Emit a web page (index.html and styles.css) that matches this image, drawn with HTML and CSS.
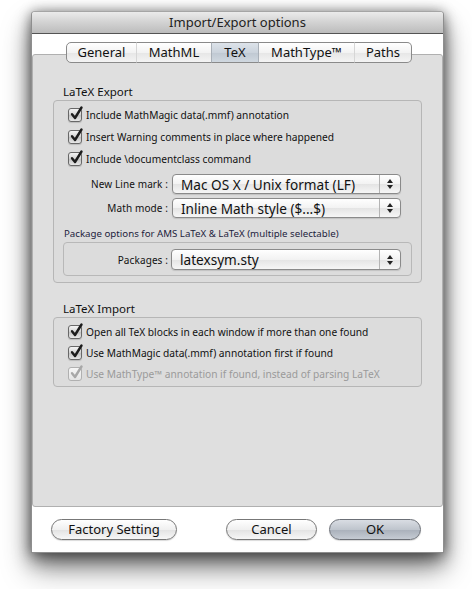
FILE: index.html
```html
<!DOCTYPE html>
<html>
<head>
<meta charset="utf-8">
<title>Import/Export options</title>
<link rel="stylesheet" href="styles.css">
</head>
<body>
<div class="window">
  <div class="titlebar">Import/Export options</div>
  <div class="main">
    <div class="tabs">
      <div class="tab t-general">General</div>
      <div class="tab t-mathml">MathML</div>
      <div class="tab t-tex selected">TeX</div>
      <div class="tab t-mathtype">MathType™</div>
      <div class="tab t-paths">Paths</div>
    </div>
    <div class="panel">
      <div class="group-label">LaTeX Export</div>
      <div class="group export">
        <div class="check"><span class="box"><svg viewBox="0 0 14 14" width="14" height="14"><path d="M3 7.2 L6 11 L12.5 0.5" /></svg></span>Include MathMagic data(.mmf) annotation</div>
        <div class="check"><span class="box"><svg viewBox="0 0 14 14" width="14" height="14"><path d="M3 7.2 L6 11 L12.5 0.5" /></svg></span>Insert Warning comments in place where happened</div>
        <div class="check"><span class="box"><svg viewBox="0 0 14 14" width="14" height="14"><path d="M3 7.2 L6 11 L12.5 0.5" /></svg></span>Include \documentclass command</div>
        <div class="field first">
          <span class="flabel">New Line mark :</span>
          <div class="popup"><span class="ptext">Mac OS X / Unix format (LF)</span><span class="arrows"><svg viewBox="0 0 8 12" width="8" height="12"><path d="M4 1 L7 5 L1 5 Z M4 11 L7 7 L1 7 Z"/></svg></span></div>
        </div>
        <div class="field">
          <span class="flabel">Math mode :</span>
          <div class="popup"><span class="ptext">Inline Math style ($...$)</span><span class="arrows"><svg viewBox="0 0 8 12" width="8" height="12"><path d="M4 1 L7 5 L1 5 Z M4 11 L7 7 L1 7 Z"/></svg></span></div>
        </div>
        <div class="sub-label">Package options for AMS LaTeX &amp; LaTeX (multiple selectable)</div>
        <div class="subgroup">
          <div class="field sub">
            <span class="flabel">Packages :</span>
            <div class="popup tall"><span class="ptext">latexsym.sty</span><span class="arrows"><svg viewBox="0 0 8 12" width="8" height="12"><path d="M4 1 L7 5 L1 5 Z M4 11 L7 7 L1 7 Z"/></svg></span></div>
          </div>
        </div>
      </div>
      <div class="group-label second">LaTeX Import</div>
      <div class="group import">
        <div class="check"><span class="box"><svg viewBox="0 0 14 14" width="14" height="14"><path d="M3 7.2 L6 11 L12.5 0.5" /></svg></span>Open all TeX blocks in each window if more than one found</div>
        <div class="check"><span class="box"><svg viewBox="0 0 14 14" width="14" height="14"><path d="M3 7.2 L6 11 L12.5 0.5" /></svg></span>Use MathMagic data(.mmf) annotation first if found</div>
        <div class="check disabled"><span class="box"><svg viewBox="0 0 14 14" width="14" height="14"><path d="M3 7.2 L6 11 L12.5 0.5" /></svg></span>Use MathType™ annotation if found, instead of parsing LaTeX</div>
      </div>
    </div>
    <div class="footer">
      <button class="btn factory">Factory Setting</button>
      <div class="spacer"></div>
      <button class="btn cancel">Cancel</button>
      <button class="btn ok">OK</button>
    </div>
  </div>
</div>
</body>
</html>
```

FILE: styles.css
```css
* { box-sizing: border-box; }
html, body { margin: 0; padding: 0; background: #ffffff; }
body {
  padding: 11px 0 0 31px;
  min-height: 589px;
  font-family: "Noto Sans", "DejaVu Sans", sans-serif;
  color: #1a1a1a;
}
.window {
  width: 413px;
  height: 542px;
  border: 1px solid #8e8e8e;
  border-top-color: #a5a5a5;
  border-radius: 4px 4px 0 0;
  background: #ffffff;
  display: flex;
  flex-direction: column;
  box-shadow:
    0 0 12px rgba(0, 0, 0, 0.35),
    0 8px 18px rgba(0, 0, 0, 0.45),
    0 16px 30px rgba(0, 0, 0, 0.4);
}
.titlebar {
  height: 22px;
  flex: none;
  border-bottom: 1px solid #545454;
  border-radius: 3px 3px 0 0;
  background: linear-gradient(#ebebeb, #d2d2d2 50%, #bcbcbc);
  text-align: center;
  font-size: 13px;
  line-height: 21px;
  color: #222;
}
.main {
  flex: 1;
  display: flex;
  flex-direction: column;
  padding-top: 8px;
}
.tabs {
  display: flex;
  margin-left: 34px;
  height: 21px;
  position: relative;
  z-index: 1;
  flex: none;
}
.tab {
  height: 21px;
  border: 1px solid #8a8a8a;
  border-left: none;
  background: linear-gradient(#ffffff, #f3f3f3 50%, #e6e6e6 51%, #f4f4f4);
  font-size: 13px;
  line-height: 19px;
  text-align: center;
  color: #111;
}
.tab:first-child { border-left: 1px solid #8a8a8a; border-radius: 5px 0 0 5px; }
.tab:last-child { border-radius: 0 5px 5px 0; }
.tab + .tab { border-left: 1px solid #d6d6d6; margin-left: -1px; }
.tab.selected { background: linear-gradient(#dde3ea, #cbd3dc 50%, #bfc8d2 51%, #d0d8e0); border-left-color: #a9b0b8; }
.tab.selected + .tab { border-left-color: #a9b0b8; }
.t-general { width: 71px; }
.t-mathml { width: 76px; }
.t-tex { width: 48px; }
.t-mathtype { width: 97px; }
.t-paths { width: 58px; }

.panel {
  flex: 1;
  margin-top: -9px;
  background: #dfdfdf;
  border: 1px solid #b0b0b0;
  border-radius: 3px;
  padding: 30px 20px 0 20px;
}
.group-label {
  font-size: 11.5px;
  line-height: 14px;
  height: 14px;
  padding-left: 10px;
  margin-bottom: 1px;
  color: #111;
}
.group-label.second { margin-top: 19px; }
.group {
  border: 1px solid #b6b6b6;
  border-radius: 4px;
  background: #dcdcdc;
}
.group.export { padding: 3px 0 6px 0; }
.group.import { padding: 3px 0 2px 0; }
.check {
  display: flex;
  align-items: center;
  height: 22px;
  padding-left: 14px;
  font-size: 10.2px;
  color: #111;
  white-space: nowrap;
}
.group.import .check { height: 21px; }
.box {
  width: 14px;
  height: 14px;
  margin-right: 4px;
  border: 1px solid #686868;
  border-radius: 3px;
  background: linear-gradient(#f4f4f4, #d2d2d2 50%, #c2c2c2 51%, #e8e8e8);
  position: relative;
  flex: none;
  box-shadow: 0 1px 1px rgba(0,0,0,0.15);
}
.box svg {
  position: absolute;
  left: 0;
  top: -2px;
  overflow: visible;
}
.box path {
  fill: none;
  stroke: #1c1c1c;
  stroke-width: 2.4;
  stroke-linecap: round;
  stroke-linejoin: round;
}
.check.disabled { color: #9a9a9a; }
.check.disabled .box { border-color: #b0b0b0; background: linear-gradient(#f6f6f6, #e4e4e4); box-shadow: none; }
.check.disabled .box path { stroke: #a8a8a8; }

.field {
  display: flex;
  align-items: center;
  margin-top: 4px;
}
.field.first { margin-top: 4px; }
.flabel {
  width: 118px;
  padding-right: 4px;
  text-align: right;
  font-size: 10px;
  letter-spacing: 0.1px;
  color: #111;
  flex: none;
}
.popup {
  width: 229px;
  height: 20px;
  border: 1px solid #8a8a8a;
  border-radius: 4px;
  background: linear-gradient(#ffffff, #f2f2f2 50%, #e4e4e4 51%, #f6f6f6);
  display: flex;
  align-items: center;
  box-shadow: 0 1px 1px rgba(0,0,0,0.12);
}
.popup.tall { height: 21px; width: 230px; }
.ptext {
  flex: 1;
  padding-left: 8px;
  font-size: 13.6px;
  color: #111;
  white-space: nowrap;
}
.arrows {
  width: 21px;
  height: 100%;
  border-left: 1px solid #b4b4b4;
  display: flex;
  align-items: center;
  justify-content: center;
}
.arrows path { fill: #222; }
.sub-label {
  margin-top: 10px;
  padding-left: 10px;
  font-size: 9.7px;
  line-height: 12px;
  color: #1c1c3c;
  white-space: nowrap;
}
.subgroup {
  margin: 2px 9px 0 9px;
  border: 1px solid #b8b8b8;
  border-radius: 4px;
  padding: 6px 0 5px 0;
}
.field.sub { margin-top: 0; }
.field.sub .flabel { width: 107px; padding-right: 3px; }

.footer {
  flex: none;
  height: 45px;
  display: flex;
  align-items: flex-start;
  padding: 12px 22px 0 19px;
}
.spacer { flex: 1; }
.btn {
  height: 21px;
  border: 1px solid #777;
  border-radius: 11px;
  background: linear-gradient(#ffffff, #f0f0f0 50%, #e2e2e2 51%, #f7f7f7);
  font-family: inherit;
  font-size: 13px;
  line-height: 19px;
  padding: 0;
  color: #111;
  box-shadow: 0 1px 1px rgba(0,0,0,0.15);
}
.factory { width: 126px; }
.cancel { width: 91px; margin-right: 12px; }
.ok {
  width: 92px;
  border-color: #6b6f76;
  background: linear-gradient(#d9dde3, #bfc5cd 50%, #a9b0ba 51%, #c5cbd3);
}
```
